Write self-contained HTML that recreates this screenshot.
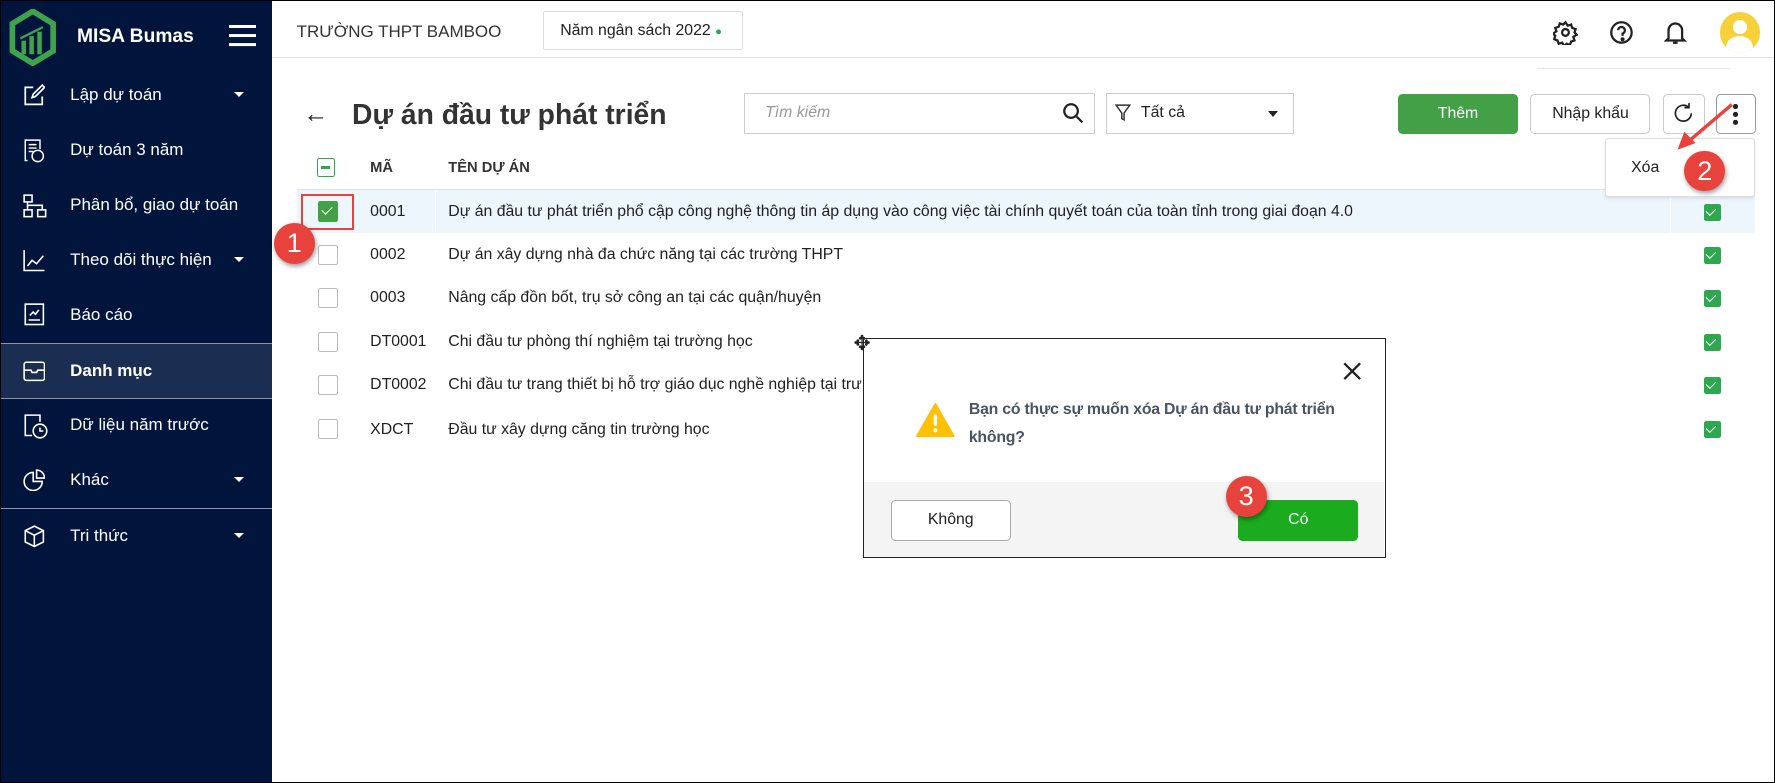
<!DOCTYPE html>
<html><head><meta charset="utf-8">
<style>
html,body{margin:0;padding:0;overflow:hidden;background:#fff}
body{zoom:1.13202;width:1568px;height:692px;position:relative;font-family:"Liberation Sans",sans-serif;color:#212121}
.abs{position:absolute}
#frame{position:absolute;left:0;top:0;width:1566px;height:690px;border:1px solid #000;pointer-events:none;z-index:50}
#side{left:0;top:0;width:240px;height:692px;background:#00143c;color:#fff}
.mi{position:absolute;left:0;width:240px;height:48px;font-size:15px;line-height:48px}
.mi span{position:absolute;left:62px}
.mi svg{position:absolute;left:20px;top:14px}
.caret{position:absolute;left:207px;top:21px;width:0;height:0;border-left:5px solid transparent;border-right:5px solid transparent;border-top:5px solid #fff}
.row{position:absolute;left:262px;width:1288px;height:38px;font-size:14px;line-height:38px;border-bottom:1px solid #fff}
.cb{position:absolute;left:19px;top:10px;width:16px;height:16px;border:1px solid #bbb;border-radius:2px;background:#fff}
.gc{position:absolute;left:1243px;top:12px;width:15px;height:15px;background:#2ea84f;border-radius:2px}
.gc:after{content:"";position:absolute;left:4px;top:2px;width:4px;height:7px;border:solid #fff;border-width:0 1.5px 1.5px 0;transform:rotate(45deg)}
.btn{position:absolute;border-radius:4px;font-size:14px;text-align:center;box-sizing:border-box}
.badge{position:absolute;width:36px;height:36px;border-radius:50%;background:#e8423c;color:#fff;font-size:24px;text-align:center;line-height:36px;box-shadow:1px 2px 4px rgba(0,0,0,.4)}
</style></head><body>
<div id="frame"></div>
<div id="side" class="abs">
  <svg class="abs" style="left:8px;top:8px" width="42" height="50" viewBox="0 0 42 50"><path d="M21 2 L39 13 L39 37 L21 48 L3 37 L3 13 Z" fill="none" stroke="#3fa34d" stroke-width="5"/><rect x="11" y="28" width="4" height="12" fill="#3fa34d"/><rect x="18" y="24" width="4" height="16" fill="#3fa34d"/><rect x="25" y="20" width="4" height="20" fill="#3fa34d"/><path d="M10 26 L30 16" stroke="#3fa34d" stroke-width="2"/></svg>
  <div class="abs" style="left:68px;top:23px;font-size:17px;font-weight:bold">MISA Bumas</div>
  <div class="abs" style="left:202px;top:22px;width:24px;height:3px;background:#fff;box-shadow:0 8px 0 #fff,0 16px 0 #fff"></div>
  <div class="mi" style="top:60px"><svg width="20" height="20" fill="none" stroke="#fff" stroke-width="1.5"><path d="M9 3H2v15h15v-7"/><path d="M8 12l1-3 8-8 2 2-8 8z"/></svg><span>Lập dự toán</span><i class="caret"></i></div>
  <div class="mi" style="top:109px"><svg width="20" height="22" fill="none" stroke="#fff" stroke-width="1.3"><path d="M4 19H2V1h13v8"/><path d="M5 5h7M5 8h7M5 11h4"/><circle cx="13" cy="15" r="5"/></svg><span>Dự toán 3 năm</span></div>
  <div class="mi" style="top:157px"><svg width="22" height="22" fill="none" stroke="#fff" stroke-width="1.4"><rect x="1" y="1" width="7" height="6"/><rect x="1" y="14" width="7" height="6"/><rect x="13" y="14" width="7" height="6"/><path d="M4 7v7M4 10h13v4"/></svg><span>Phân bổ, giao dự toán</span></div>
  <div class="mi" style="top:206px"><svg width="20" height="20" fill="none" stroke="#fff" stroke-width="1.4"><path d="M1 1v18h18"/><path d="M4 15l4-5 4 3 6-7"/></svg><span>Theo dõi thực hiện</span><i class="caret"></i></div>
  <div class="mi" style="top:254px"><svg width="20" height="20" fill="none" stroke="#fff" stroke-width="1.4"><rect x="2" y="1" width="16" height="18"/><path d="M5 15h10M6 11l3-3 2 2 3-4"/></svg><span>Báo cáo</span></div>
  <div class="mi" style="top:303px;background:#1c2d52;border-top:1px solid #8a93a8;border-bottom:1px solid #8a93a8;height:48px;font-weight:bold"><svg width="20" height="20" fill="none" stroke="#fff" stroke-width="1.4"><rect x="1" y="2" width="18" height="16" rx="2"/><path d="M1 9h6l1 2h4l1-2h6"/></svg><span>Danh mục</span></div>
  <div class="mi" style="top:352px"><svg width="22" height="22" fill="none" stroke="#fff" stroke-width="1.4"><path d="M8 19H2V1h13v6"/><circle cx="15" cy="15" r="6"/><path d="M15 12v3h3"/></svg><span>Dữ liệu năm trước</span></div>
  <div class="mi" style="top:400px"><svg width="20" height="20" fill="none" stroke="#fff" stroke-width="1.4"><path d="M9 3a8 8 0 1 0 8 8H9z"/><path d="M12 1v7h7a7 7 0 0 0-7-7z"/></svg><span>Khác</span><i class="caret"></i></div>
  <div class="abs" style="left:0;top:449px;width:240px;height:1px;background:#8a93a8"></div>
  <div class="mi" style="top:450px"><svg width="20" height="20" fill="none" stroke="#fff" stroke-width="1.4"><path d="M10 1l8 4v10l-8 4-8-4V5z"/><path d="M2 5l8 4 8-4M10 9v10"/></svg><span>Tri thức</span><i class="caret"></i></div>
</div>

<div class="abs" style="left:240px;top:0;width:1328px;height:50px;border-bottom:1px solid #e0e0e0"></div>
<div class="abs" style="left:262px;top:19px;font-size:15px;color:#333">TRƯỜNG THPT BAMBOO</div>
<div class="abs" style="left:480px;top:10px;width:176px;height:34px;border:1px solid #ddd;border-radius:2px;font-size:14px;line-height:34px;box-sizing:border-box;padding-left:14px">Năm ngân sách 2022 <span style="color:#2ea84f;font-size:10px">●</span></div>
<svg class="abs" style="left:1372px;top:18px" width="22" height="22" fill="none" stroke="#222" stroke-width="2"><circle cx="11" cy="11" r="3"/><path d="M11 2l2 3 3-1 1 3 3 1-1 3 2 2-3 2 1 3-3 1-1 3-3-1-2 2-2-3-3 1-1-3-3-1 1-3-2-2 3-2-1-3 3-1 1-3 3 1z"/></svg>
<svg class="abs" style="left:1421px;top:18px" width="22" height="22" fill="none" stroke="#222" stroke-width="2"><circle cx="11" cy="11" r="9"/><path d="M8 9a3 3 0 1 1 4 3v2"/><circle cx="12" cy="17" r=".8" fill="#222"/></svg>
<svg class="abs" style="left:1470px;top:17px" width="20" height="24" fill="none" stroke="#222" stroke-width="2"><path d="M4 17V10a6 6 0 0 1 12 0v7l2 2H2z"/><path d="M8 21h4"/></svg>
<div class="abs" style="left:1519px;top:11px;width:36px;height:36px;border-radius:50%;background:#f7d13a;overflow:hidden"><div class="abs" style="left:12px;top:7px;width:12px;height:12px;border-radius:50%;background:#fff"></div><div class="abs" style="left:6px;top:21px;width:24px;height:20px;border-radius:50%;background:#fff"></div></div>
<div class="abs" style="left:1358px;top:60px;width:170px;height:1px;background:#e6e6e6"></div>

<div class="abs" style="left:268px;top:88px;font-size:22px">←</div>
<div class="abs" style="left:311px;top:87px;font-size:25px;font-weight:bold;color:#333">Dự án đầu tư phát triển</div>
<div class="abs" style="left:657px;top:82px;width:310px;height:36px;border:1px solid #ccc;box-sizing:border-box;font-size:14px;color:#999;font-style:italic;line-height:34px;padding-left:18px">Tìm kiếm</div>
<svg class="abs" style="left:938px;top:90px" width="20" height="20" fill="none" stroke="#222" stroke-width="2"><circle cx="8" cy="8" r="6"/><path d="M13 13l5 5"/></svg>
<div class="abs" style="left:977px;top:82px;width:166px;height:36px;border:1px solid #ccc;box-sizing:border-box;font-size:14px;line-height:34px;padding-left:30px">Tất cả</div>
<svg class="abs" style="left:985px;top:92px" width="14" height="16" fill="none" stroke="#333" stroke-width="1.3"><path d="M1 1h12L8 8v6l-2-1V8z"/></svg>
<div class="abs" style="left:1120px;top:98px;border-left:5px solid transparent;border-right:5px solid transparent;border-top:6px solid #222"></div>
<div class="btn" style="left:1235px;top:83px;width:106px;height:35px;background:#43a047;color:#fff;line-height:35px">Thêm</div>
<div class="btn" style="left:1352px;top:83px;width:106px;height:35px;border:1px solid #ccc;line-height:33px">Nhập khẩu</div>
<div class="btn" style="left:1469px;top:83px;width:37px;height:35px;border:1px solid #ccc"></div>
<svg class="abs" style="left:1477px;top:90px" width="20" height="20" fill="none" stroke="#222" stroke-width="1.5"><path d="M17 10a7 7 0 1 1-2-5"/><path d="M15 1v4h-4"/></svg>
<div class="btn" style="left:1516px;top:83px;width:35px;height:35px;border:1px solid #999"></div>
<div class="abs" style="left:1531px;top:92px;width:4px;height:4px;border-radius:50%;background:#222;box-shadow:0 7px 0 #222,0 14px 0 #222"></div>
<div class="abs" style="left:1418px;top:122px;width:132px;height:52px;border:1px solid #ddd;border-radius:3px;background:#fff;box-shadow:0 1px 3px rgba(0,0,0,.1);z-index:3;font-size:14px;line-height:52px;padding-left:22px;box-sizing:border-box">Xóa</div>
<svg class="abs" style="left:1478px;top:88px;z-index:5" width="60" height="50"><path d="M52 4 L12 38" stroke="#e8423c" stroke-width="3"/><path d="M4 44 L10 28 L20 38 Z" fill="#e8423c"/></svg>
<div class="badge" style="left:1488px;top:133px;z-index:6">2</div>

<div class="abs" style="left:280px;top:140px;width:16px;height:16px;border:1px solid #2ea84f;border-radius:2px;box-sizing:border-box"><div class="abs" style="left:3px;top:6px;width:8px;height:2px;background:#2ea84f"></div></div>
<div class="abs" style="left:327px;top:141px;font-size:13px;font-weight:bold;color:#333">MÃ</div>
<div class="abs" style="left:396px;top:141px;font-size:13px;font-weight:bold;color:#333">TÊN DỰ ÁN</div>
<div class="abs" style="left:262px;top:167px;width:1288px;height:1px;background:#e3e3e3"></div>

<div class="row" style="top:168px;background:#edf5fd"><div class="abs" style="left:1213px;top:0;width:1px;height:38px;background:#fff"></div><div class="abs" style="left:122px;top:0;width:1px;height:38px;background:#fff"></div><div class="cb" style="background:#43a047;border-color:#43a047"></div><div class="abs" style="left:24px;top:12px;width:4px;height:8px;border:solid #fff;border-width:0 1.5px 1.5px 0;transform:rotate(45deg)"></div><span class="abs" style="left:65px">0001</span><span class="abs" style="left:134px">Dự án đầu tư phát triển phổ cập công nghệ thông tin áp dụng vào công việc tài chính quyết toán của toàn tỉnh trong giai đoạn 4.0</span><i class="gc"></i></div>
<div class="abs" style="left:266px;top:171px;width:47px;height:32px;border:2px solid #e8423c;box-sizing:border-box"></div>
<div class="badge" style="left:242px;top:197px;z-index:6">1</div>
<div class="row" style="top:206px"><div class="cb"></div><span class="abs" style="left:65px">0002</span><span class="abs" style="left:134px">Dự án xây dựng nhà đa chức năng tại các trường THPT</span><i class="gc"></i></div>
<div class="row" style="top:244px"><div class="cb"></div><span class="abs" style="left:65px">0003</span><span class="abs" style="left:134px">Nâng cấp đồn bốt, trụ sở công an tại các quận/huyện</span><i class="gc"></i></div>
<div class="row" style="top:283px"><div class="cb"></div><span class="abs" style="left:65px">DT0001</span><span class="abs" style="left:134px">Chi đầu tư phòng thí nghiệm tại trường học</span><i class="gc"></i></div>
<div class="row" style="top:321px"><div class="cb"></div><span class="abs" style="left:65px">DT0002</span><span class="abs" style="left:134px">Chi đầu tư trang thiết bị hỗ trợ giáo dục nghề nghiệp tại trư</span><i class="gc"></i></div>
<div class="row" style="top:360px"><div class="cb"></div><span class="abs" style="left:65px">XDCT</span><span class="abs" style="left:134px">Đầu tư xây dựng căng tin trường học</span><i class="gc"></i></div>

<div class="abs" style="left:762px;top:299px;width:462px;height:194px;border:1px solid #222;box-sizing:border-box;background:#fff;z-index:10">
  <svg class="abs" style="left:423px;top:19px" width="18" height="18" stroke="#222" stroke-width="2"><path d="M2 2l14 14M16 2L2 16"/></svg>
  <svg class="abs" style="left:45px;top:55px" width="36" height="32"><path d="M18 2 L34 30 L2 30 Z" fill="#ffc107" stroke="#ffc107" stroke-width="2" stroke-linejoin="round"/><rect x="16.5" y="11" width="3" height="10" rx="1.5" fill="#fff"/><circle cx="18" cy="25" r="1.8" fill="#fff"/></svg>
  <div class="abs" style="left:93px;top:50px;width:340px;font-size:14px;font-weight:bold;line-height:25px;color:#4a5363;letter-spacing:-0.2px">Bạn có thực sự muốn xóa Dự án đầu tư phát triển không?</div>
  <div class="abs" style="left:0;top:126px;width:460px;height:66px;background:#f4f4f4"></div>
  <div class="btn" style="left:24px;top:142px;width:106px;height:36px;border:1px solid #aaa;background:#fff;line-height:34px">Không</div>
  <div class="btn" style="left:331px;top:142px;width:106px;height:36px;background:#1aab1e;color:#fff;line-height:36px">Có</div>
  <div class="badge" style="left:320px;top:121px">3</div>
</div>
<div class="abs" style="left:754px;top:292px;font-size:18px;z-index:11;color:#222">✥</div>
</body></html>
